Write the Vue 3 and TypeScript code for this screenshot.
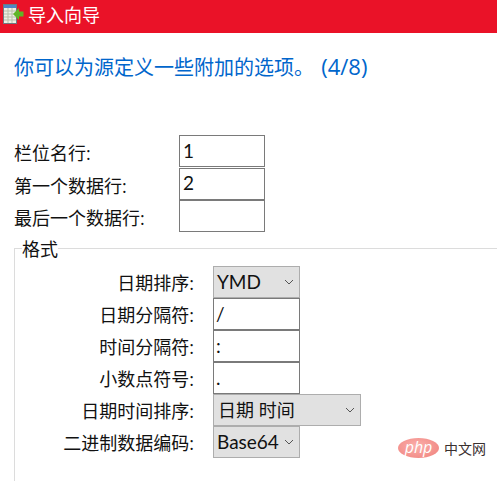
<script setup lang="ts">
interface Row { label: string; type: 'input' | 'select'; value: string; wide?: boolean }
const topRows: Row[] = [
  { label: '栏位名行:', type: 'input', value: '1' },
  { label: '第一个数据行:', type: 'input', value: '2' },
  { label: '最后一个数据行:', type: 'input', value: '' },
]
const formatRows: Row[] = [
  { label: '日期排序:', type: 'select', value: 'YMD' },
  { label: '日期分隔符:', type: 'input', value: '/' },
  { label: '时间分隔符:', type: 'input', value: ':' },
  { label: '小数点符号:', type: 'input', value: '.' },
  { label: '日期时间排序:', type: 'select', value: '日期 时间', wide: true },
  { label: '二进制数据编码:', type: 'select', value: 'Base64' },
]
</script>

<template>
  <div class="wizard">
    <header class="titlebar">
      <svg class="app-icon" width="24" height="24" viewBox="0 0 24 24">
        <rect x="3.5" y="4.5" width="13" height="19" fill="#eef0e6" stroke="#6f7a80" />
        <rect x="4" y="5" width="12" height="3" fill="#4f86c6" />
        <path d="M4 11h12M4 14h12M4 17h12M4 20h12M8 8v15M12 8v15" stroke="#b9bfa8" stroke-width="1" fill="none" />
        <path d="M13 14l6-6v3.500h4.500v5H19v3.500z" fill="#5fb526" />
      </svg>
      <span class="title">导入向导</span>
    </header>

    <h1 class="heading">你可以为源定义一些附加的选项。 <span class="step">(4/8)</span></h1>

    <div class="top-form">
      <div v-for="row in topRows" :key="row.label" class="top-row">
        <label class="top-label">{{ row.label }}</label>
        <input class="field" :value="row.value" readonly />
      </div>
    </div>

    <fieldset class="format">
      <legend class="legend">格式</legend>
      <div v-for="row in formatRows" :key="row.label" class="format-row">
        <label class="format-label">{{ row.label }}</label>
        <input v-if="row.type === 'input'" class="field" :value="row.value" readonly />
        <div v-else class="select" :class="{ wide: row.wide }">
          <span class="select-text">{{ row.value }}</span>
          <svg class="chevron" width="10" height="6" viewBox="0 0 10 6">
            <path d="M1 1l4 4 4-4" fill="none" stroke="#555" stroke-width="1" />
          </svg>
        </div>
      </div>
    </fieldset>

    <div class="watermark">
      <span class="php-badge">php</span>
      <span class="php-cn">中文网</span>
    </div>
  </div>
</template>

<style scoped>
.wizard {
  position: relative;
  width: 497px;
  height: 481px;
  overflow: hidden;
  background: #fff;
  color: #111;
  font-family: "Open Sans", "Noto Sans CJK SC", sans-serif;
  font-size: 18px;
}
.titlebar {
  display: flex;
  align-items: center;
  height: 33px;
  background: #ea1228;
  color: #fff;
}
.app-icon {
  margin-right: 4px;
  margin-top: -10px;
  flex: none;
}
.title {
  font-family: "Noto Sans CJK SC", sans-serif;
  line-height: 33px;
  margin-top: -4px;
}
.heading {
  height: 24px;
  margin: 21px 0 0 14px;
  font-size: 20px;
  font-weight: 400;
  line-height: 24px;
  color: #0066cc;
  white-space: nowrap;
}
.step {
  margin-left: 2px;
  font-size: 22px;
}
.top-form {
  display: grid;
  grid-auto-rows: 32.5px;
  margin-top: 57px;
}
.top-row {
  display: grid;
  grid-template-columns: 179px 86px;
  align-items: center;
}
.top-label {
  padding-left: 14px;
  padding-top: 4px;
  line-height: 24px;
  white-space: nowrap;
}
.field {
  box-sizing: border-box;
  width: 86px;
  height: 32px;
  padding: 0 3px 2px;
  border: 1px solid #7a7a7a;
  border-radius: 0;
  outline: none;
  background: #fff;
  color: #111;
  font-family: Lato, "Noto Sans CJK SC", sans-serif;
  font-size: 19px;
}
.format {
  margin: 6.500px 0 0 14px;
  padding: 9px 0 0;
  min-width: 0;
  height: 300px;
  border: 0;
  border-top: 1px solid #dcdcdc;
  border-left: 1px solid #dcdcdc;
}
.legend {
  margin-left: 7px;
  padding: 0;
  font-family: "Noto Sans CJK SC", sans-serif;
  line-height: 18px;
}
.format-row {
  display: grid;
  grid-template-columns: 198px auto;
  justify-content: start;
  align-items: center;
  height: 32px;
}
.format-label {
  padding-right: 19px;
  padding-top: 2px;
  line-height: 24px;
  text-align: right;
  white-space: nowrap;
}
.format-row .field {
  width: 87px;
  padding-left: 2px;
}
.select {
  position: relative;
  box-sizing: border-box;
  display: flex;
  align-items: center;
  width: 87px;
  height: 32px;
  padding-left: 3px;
  border: 1px solid #adadad;
  background: #e1e1e1;
  font-family: Lato, "Noto Sans CJK SC", sans-serif;
  font-size: 19px;
}
.select.wide {
  width: 148px;
  padding-left: 4px;
  font-family: "Open Sans", "Noto Sans CJK SC", sans-serif;
  font-size: 18px;
}
.select-text {
  line-height: 30px;
  white-space: nowrap;
}
.chevron {
  position: absolute;
  right: 5px;
  top: 12px;
}
.watermark {
  position: absolute;
  left: 398px;
  top: 438px;
  display: flex;
  align-items: center;
  gap: 5px;
}
.php-badge {
  width: 41px;
  height: 20px;
  border-radius: 50%;
  background: radial-gradient(ellipse at 45% 40%, #fbb0ac, #ef7f7a);
  color: #fff;
  font-family: "Open Sans", sans-serif;
  font-size: 16px;
  font-style: italic;
  line-height: 18px;
  text-align: center;
}
.php-cn {
  font-family: "Noto Sans CJK SC", sans-serif;
  font-size: 14px;
  line-height: 20px;
  color: #3a3030;
}
</style>

<style>
html, body {
  margin: 0;
  background: #fff;
  overflow: hidden;
}
</style>
